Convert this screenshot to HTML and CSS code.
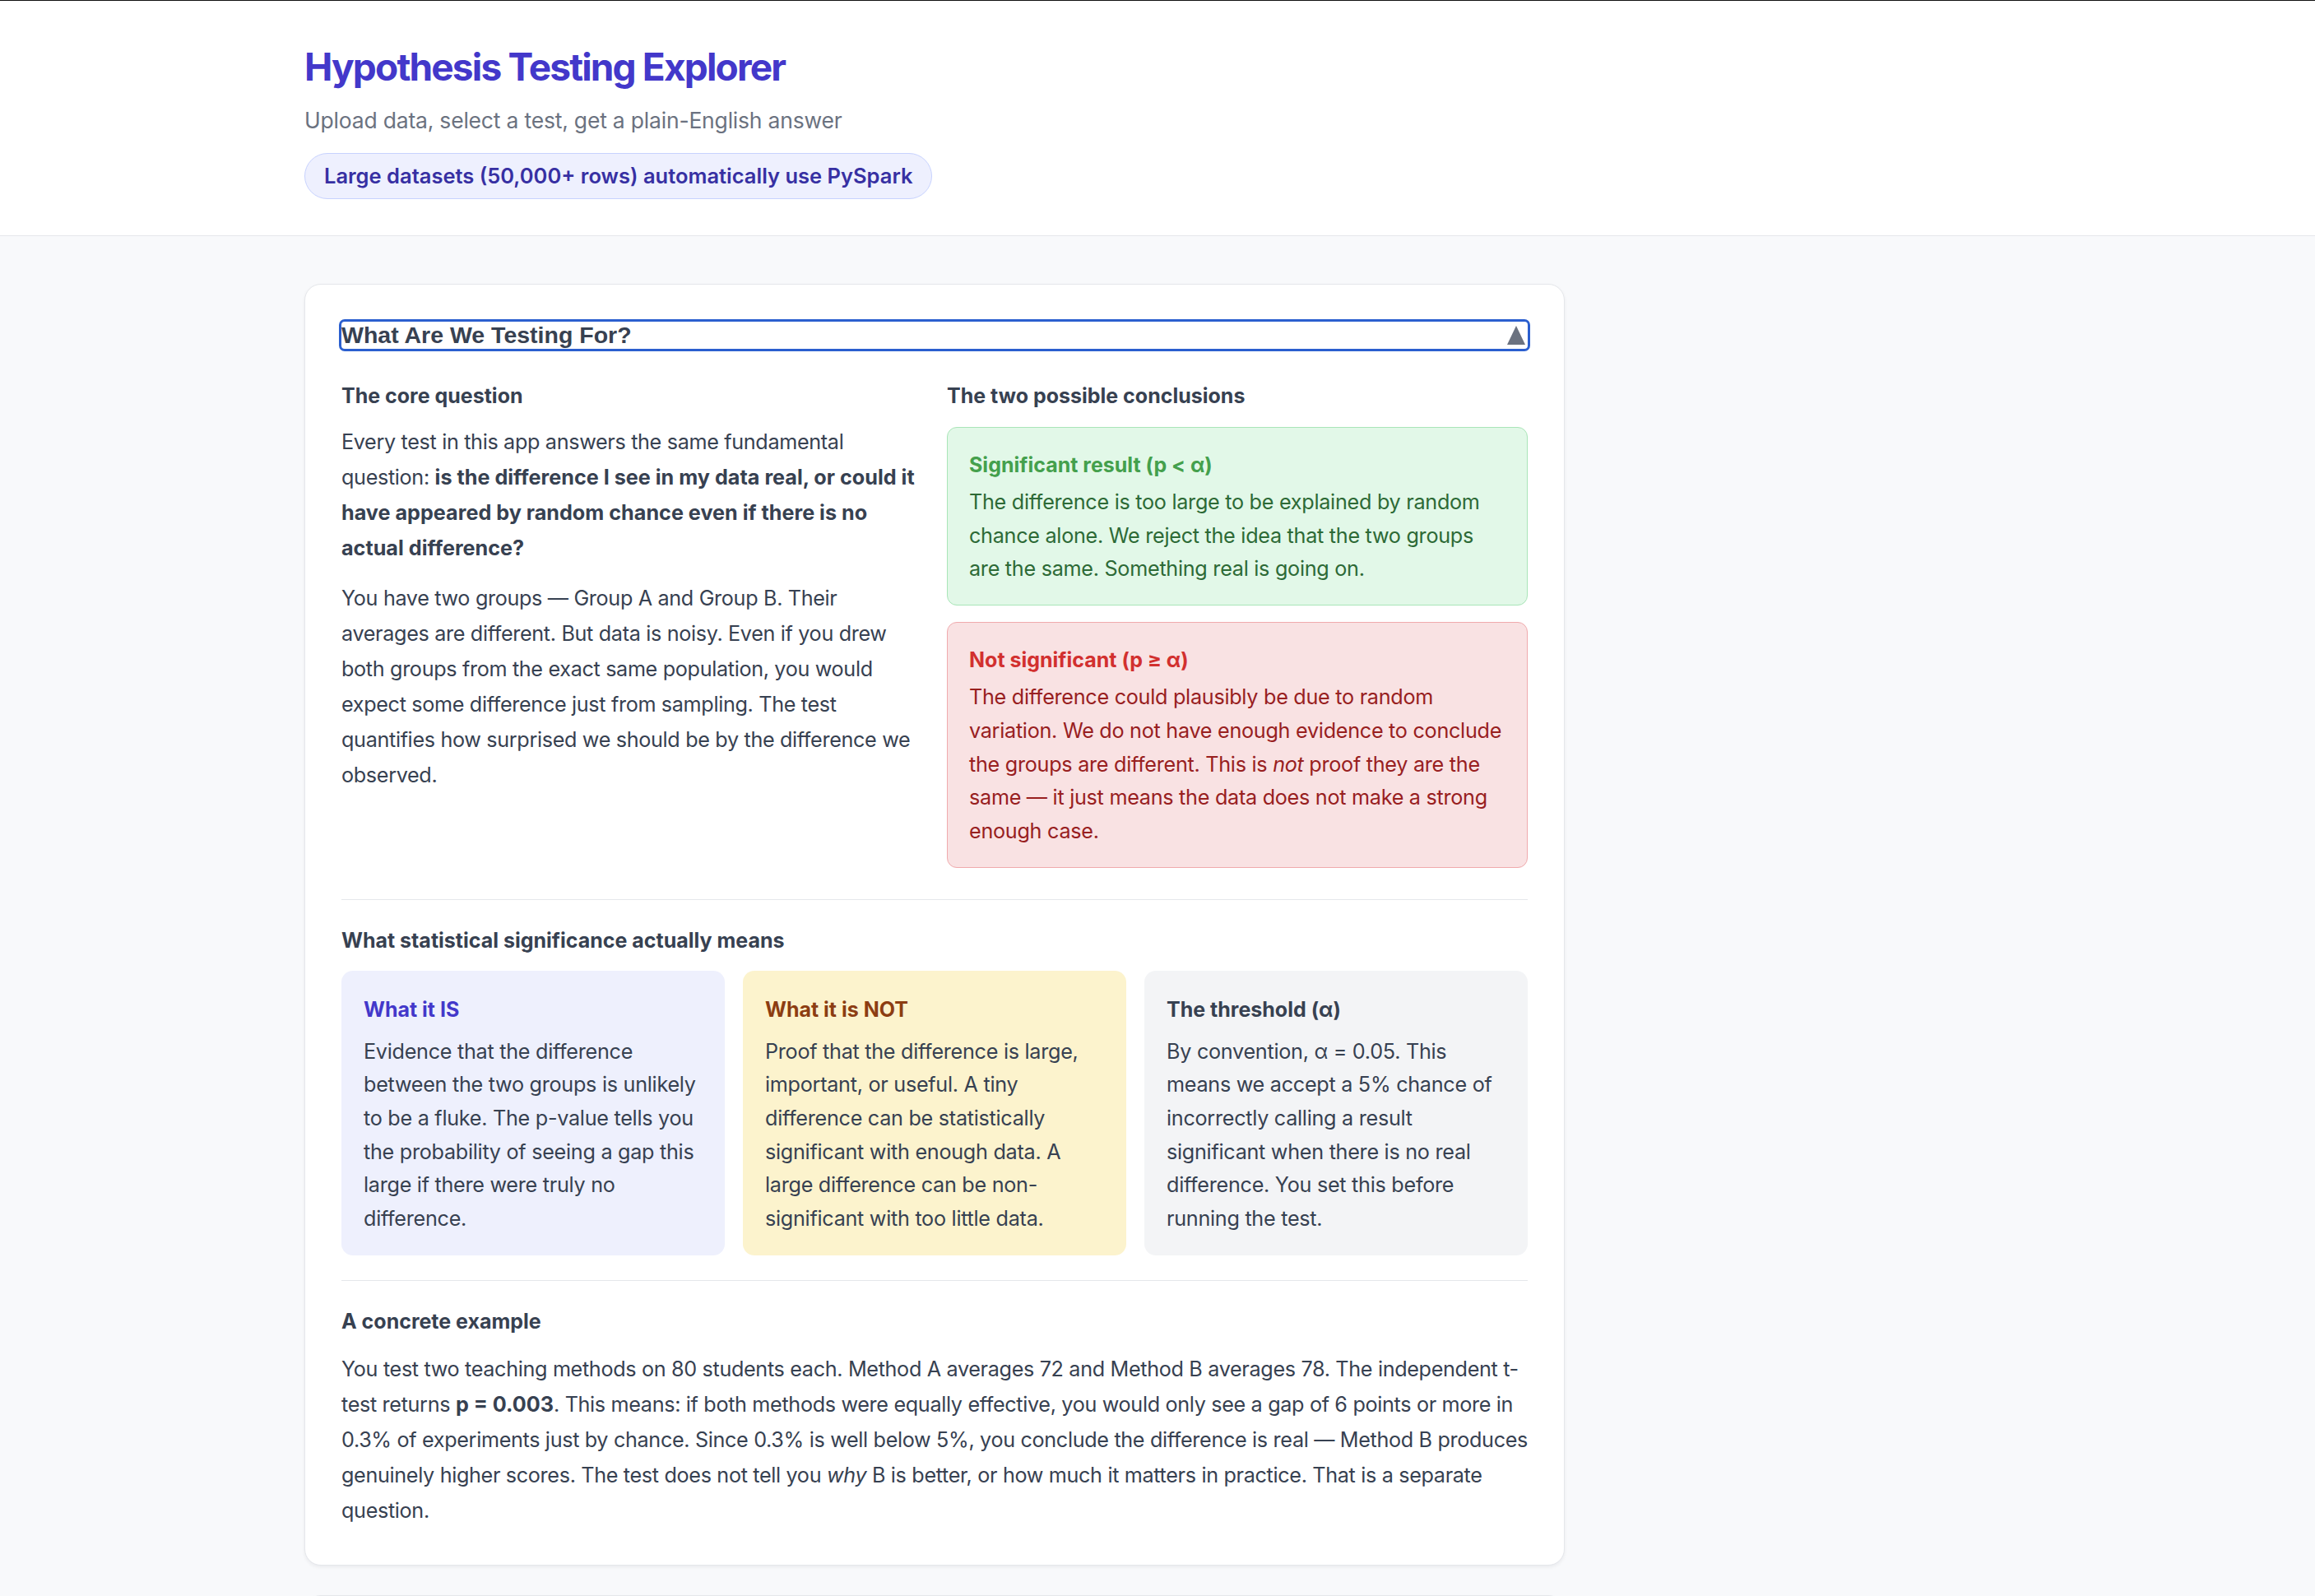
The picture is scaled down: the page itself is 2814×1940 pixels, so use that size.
FILE: index.html
```html
<!DOCTYPE html>
<html lang="en">
<head>
<meta charset="utf-8">
<title>Hypothesis Testing Explorer</title>
<link rel="stylesheet" href="styles.css">
</head>
<body>
<header class="site-header">
  <div class="wrap">
    <h1 class="title">Hypothesis Testing Explorer</h1>
    <p class="subtitle">Upload data, select a test, get a plain-English answer</p>
    <span class="badge">Large datasets (50,000+ rows) automatically use PySpark</span>
  </div>
</header>
<main class="main">
  <div class="wrap">
    <section class="card">
      <details open>
        <summary class="summary"><span>What Are We Testing For?</span><span class="caret"></span></summary>
        <div class="cols">
          <div class="col">
            <h3 class="sec-title">The core question</h3>
            <p class="para">Every test in this app answers the same fundamental question: <strong>is the difference I see in my data real, or could it have appeared by random chance even if there is no actual difference?</strong></p>
            <p class="para">You have two groups — Group A and Group B. Their averages are different. But data is noisy. Even if you drew both groups from the exact same population, you would expect some difference just from sampling. The test quantifies how surprised we should be by the difference we observed.</p>
          </div>
          <div class="col">
            <h3 class="sec-title">The two possible conclusions</h3>
            <div class="outcomes">
              <div class="outcome outcome-yes">
                <div class="outcome-title">Significant result (p &lt; α)</div>
                <p class="outcome-text">The difference is too large to be explained by random chance alone. We reject the idea that the two groups are the same. Something real is going on.</p>
              </div>
              <div class="outcome outcome-no">
                <div class="outcome-title">Not significant (p ≥ α)</div>
                <p class="outcome-text">The difference could plausibly be due to random variation. We do not have enough evidence to conclude the groups are different. This is <em>not</em> proof they are the same — it just means the data does not make a strong enough case.</p>
              </div>
            </div>
          </div>
        </div>
        <hr class="divider">
        <h3 class="sec-title sec-title-b">What statistical significance actually means</h3>
        <div class="tiles">
          <div class="tile tile-is">
            <div class="tile-title">What it IS</div>
            <p class="tile-text">Evidence that the difference between the two groups is unlikely to be a fluke. The p-value tells you the probability of seeing a gap this large if there were truly no difference.</p>
          </div>
          <div class="tile tile-not">
            <div class="tile-title">What it is NOT</div>
            <p class="tile-text">Proof that the difference is large, important, or useful. A tiny difference can be statistically significant with enough data. A large difference can be non-significant with too little data.</p>
          </div>
          <div class="tile tile-alpha">
            <div class="tile-title">The threshold (α)</div>
            <p class="tile-text">By convention, α = 0.05. This means we accept a 5% chance of incorrectly calling a result significant when there is no real difference. You set this before running the test.</p>
          </div>
        </div>
        <hr class="divider divider-b">
        <h3 class="sec-title sec-title-c">A concrete example</h3>
        <p class="para">You test two teaching methods on 80 students each. Method A averages 72 and Method B averages 78. The independent t-test returns <strong>p = 0.003</strong>. This means: if both methods were equally effective, you would only see a gap of 6 points or more in 0.3% of experiments just by chance. Since 0.3% is well below 5%, you conclude the difference is real — Method B produces genuinely higher scores. The test does not tell you <em>why</em> B is better, or how much it matters in practice. That is a separate question.</p>
      </details>
    </section>
    <section class="card card-next"></section>
  </div>
</main>
</body>
</html>
```

FILE: styles.css
```css
* { box-sizing: border-box; }

html, body {
  margin: 0;
  padding: 0;
}

body {
  font-family: Inter, "Noto Sans", "Liberation Sans", sans-serif;
  color: #374151;
  background: #f8f9fb;
  border-top: 1px solid #111;
}

.wrap {
  margin-left: 370px;
  width: 1532px;
}

/* Header */
.site-header {
  background: #ffffff;
  border-bottom: 1px solid #e5e7eb;
  padding: 52px 0 44px;
}

.title {
  margin: 0;
  font-size: 46px;
  line-height: 56px;
  font-weight: 700;
  letter-spacing: -0.04em;
  color: #4338ca;
}

.subtitle {
  margin: 17px 0 0;
  font-size: 26.5px;
  line-height: 40px;
  letter-spacing: -0.2px;
  color: #6b7280;
}

.badge {
  display: inline-block;
  margin-top: 20px;
  padding: 12px 23px;
  border: 1px solid #c7d2fe;
  border-radius: 999px;
  background: #eef0fe;
  color: #3730a3;
  font-size: 25.5px;
  line-height: 30px;
  font-weight: 600;
}

/* Main */
.main {
  padding-top: 58px;
}

.card {
  background: #ffffff;
  border: 1px solid #e5e7eb;
  border-radius: 20px;
  box-shadow: 0 2px 4px rgba(17, 24, 39, 0.06);
  padding: 45px 44px 44px;
}

.card-next {
  margin-top: 36px;
  height: 200px;
}

.summary {
  display: flex;
  justify-content: space-between;
  align-items: center;
  list-style: none;
  cursor: pointer;
  font-family: "Liberation Sans", Arial, sans-serif;
  font-weight: 700;
  font-size: 28.5px;
  line-height: 33px;
  color: #374151;
  outline: 3px solid #2b5fcf;
  outline-offset: 0;
  border-radius: 4px;
}

.summary::-webkit-details-marker { display: none; }

.caret {
  width: 0;
  height: 0;
  margin-right: 3px;
  border-left: 11.5px solid transparent;
  border-right: 11.5px solid transparent;
  border-bottom: 23px solid #6b7280;
}

.cols {
  display: grid;
  grid-template-columns: 1fr 1fr;
  column-gap: 30px;
  margin-top: 40px;
}

.sec-title {
  margin: 0 0 18px;
  font-size: 25px;
  line-height: 34px;
  font-weight: 700;
  color: #374151;
}

.para {
  margin: 0 0 18px;
  font-size: 25.2px;
  line-height: 43px;
  letter-spacing: -0.34px;
  color: #374151;
}

.para:last-child { margin-bottom: 0; }

.para strong {
  font-weight: 700;
  letter-spacing: 0;
}

.outcomes {
  padding-top: 3px;
  display: flex;
  flex-direction: column;
  gap: 20px;
}

.outcome {
  border: 1px solid;
  border-radius: 12px;
  padding: 28px 26px 23px;
}

.outcome-title {
  font-size: 25px;
  line-height: 34px;
  font-weight: 700;
  margin-bottom: 8px;
}

.outcome-text {
  margin: 0;
  font-size: 25.2px;
  line-height: 40.7px;
  letter-spacing: -0.28px;
}

.outcome-yes {
  background: #e2f8e8;
  border-color: #a9e5b8;
}
.outcome-yes .outcome-title { color: #44a04c; }
.outcome-yes .outcome-text { color: #2d6a36; }

.outcome-no {
  background: #f9e2e3;
  border-color: #f0aaad;
}
.outcome-no .outcome-title { color: #d2302f; }
.outcome-no .outcome-text { color: #98201f; }

.divider {
  border: 0;
  border-top: 1px solid #e5e7eb;
  margin: 38px 0 0;
}

.divider-b { margin-top: 30px; }

.sec-title-b,
.sec-title-c {
  margin-top: 32px;
}

.sec-title-b { margin-bottom: 20px; }
.sec-title-c { margin-bottom: 20px; }

.tiles {
  display: grid;
  grid-template-columns: repeat(3, 1fr);
  gap: 22px;
}

.tile {
  border-radius: 14px;
  padding: 30px 27px 24px;
}

.tile-title {
  font-size: 25px;
  line-height: 34px;
  font-weight: 700;
  margin-bottom: 14px;
}

.tile-text {
  margin: 0;
  font-size: 25.2px;
  line-height: 40.7px;
  letter-spacing: -0.28px;
  color: #374151;
}

.tile-is { background: #eef0fd; }
.tile-is .tile-title { color: #4338ca; }

.tile-not { background: #fcf3cd; }
.tile-not .tile-title { color: #8c3d12; }

.tile-alpha { background: #f3f4f6; }
.tile-alpha .tile-title { color: #374151; }
```
